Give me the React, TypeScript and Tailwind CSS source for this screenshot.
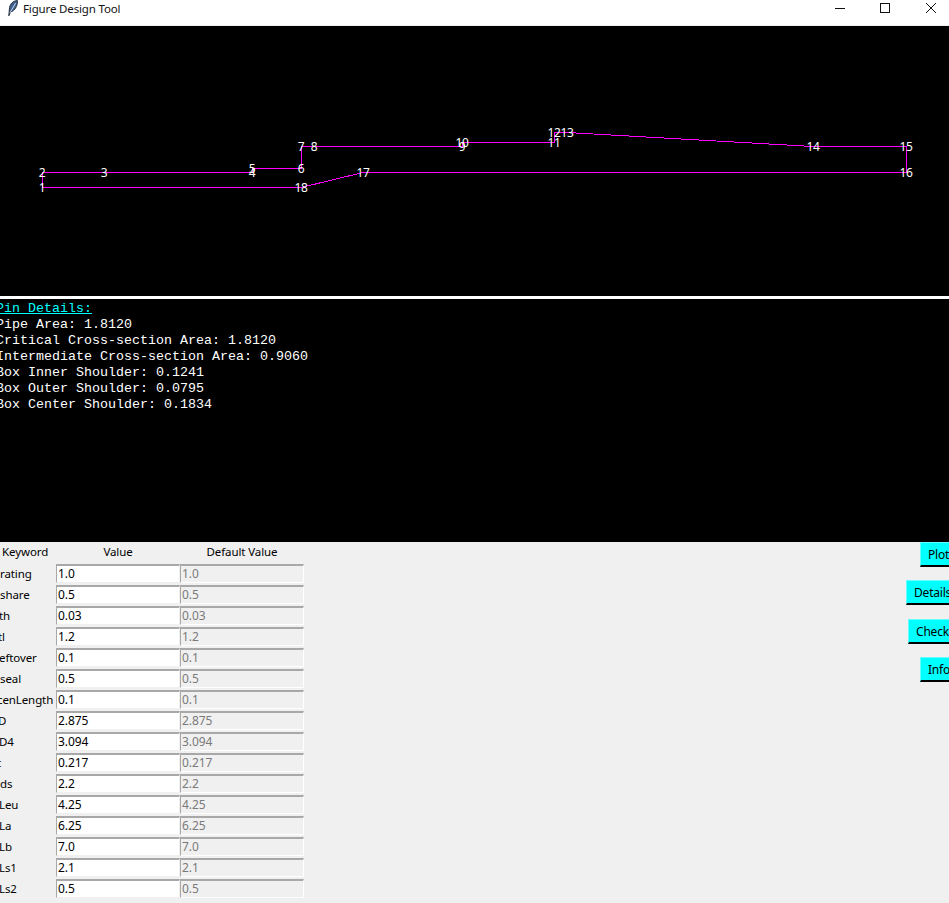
import React from "react";

const UI = { fontFamily: '"Noto Sans", "Open Sans", sans-serif' };

const pts: Record<number, [number, number]> = {
  1: [42, 187.5], 2: [42, 172.5], 3: [104, 172.5], 4: [252, 172.5], 5: [252, 168.5], 6: [301, 168.5],
  7: [301, 146.5], 8: [314, 146.5], 9: [462, 146.5], 10: [462, 142.5], 11: [554, 142.5], 12: [554, 132.5],
  13: [567, 132.5], 14: [813, 146.5], 15: [906, 146.5], 16: [906, 172.5], 17: [363, 172.5], 18: [301, 187.5],
};
const order = [1, 2, 3, 4, 5, 6, 7, 8, 9, 10, 11, 12, 13, 14, 15, 16, 17, 18, 1];

const rows: [string, string, number][] = [
  ["rating", "1.0", 0], ["share", "0.5", 0], ["th", "0.03", -1], ["tl", "1.2", -2], ["eftover", "0.1", -1],
  ["seal", "0.5", 0], ["cenLength", "0.1", -3], ["D", "2.875", -2], ["D4", "3.094", -1], ["t", "0.217", -3],
  ["ds", "2.2", 0], ["Leu", "4.25", -1], ["La", "6.25", -1], ["Lb", "7.0", -1], ["Ls1", "2.1", -1], ["Ls2", "0.5", -1],
];

const details = [
  "Pipe Area: 1.8120",
  "Critical Cross-section Area: 1.8120",
  "Intermediate Cross-section Area: 0.9060",
  "Box Inner Shoulder: 0.1241",
  "Box Outer Shoulder: 0.0795",
  "Box Center Shoulder: 0.1834",
];

function TkButton({ label, w, mb }: { label: string; w: string; mb: string }) {
  return (
    <div className={`${w} ${mb} h-[25px] bg-[#00ffff] border-l border-t border-[#66ffff] border-b-2 border-b-black text-[12px] tracking-[-0.2px] text-black flex items-center pl-[7px] pt-px overflow-hidden whitespace-nowrap`}>
      {label}
    </div>
  );
}

export default function App() {
  return (
    <div className="w-[949px] h-[903px] overflow-hidden flex flex-col bg-[#f0f0f0]" style={UI}>
      <div className="h-[25px] bg-white flex items-center shrink-0 pb-[8px]">
        <svg width="16" height="17" viewBox="0 0 16 17" className="ml-[3px]">
          <path d="M14.5 0.6 C10 0.6 6.6 4.2 6.4 9 L5.8 15.8 L7.6 11.8 C11.4 11.4 14.8 6 14.5 0.6 Z" fill="#3f6190" stroke="#18222f" strokeWidth="0.9" />
          <path d="M6.8 13 L12.6 3.2" stroke="#d3e0f2" strokeWidth="0.9" fill="none" />
        </svg>
        <span className="ml-[4px] text-[11.5px] text-[#111] leading-none tracking-[-0.15px]">Figure Design Tool</span>
        <div className="ml-auto flex items-center">
          <svg width="46" height="17" viewBox="0 0 46 17"><path d="M24 8.5H34" stroke="#111" fill="none" /></svg>
          <svg width="46" height="17" viewBox="0 0 46 17"><rect x="23.5" y="3.5" width="9" height="9" stroke="#111" fill="none" /></svg>
          <svg width="46" height="17" viewBox="0 0 46 17"><path d="M23 3L33 13M33 3L23 13" stroke="#111" fill="none" /></svg>
        </div>
      </div>
      <div className="h-px bg-[#f0f0f0] shrink-0" />

      <div className="h-[270px] bg-black shrink-0 overflow-hidden">
        <svg width="949" height="270" viewBox="0 26 949 270" className="block" shapeRendering="crispEdges">
          <polyline points={order.map((n) => pts[n].join(",")).join(" ")} fill="none" stroke="#ff00ff" strokeWidth="1" />
          {Object.entries(pts).map(([n, p]) => (
            <text key={n} x={p[0]} y={p[1] + 4.5} textAnchor="middle" fontSize="12" letterSpacing="-0.3" fill="#ffffff" style={{ fontFamily: '"Noto Sans", sans-serif' }}>
              {n}
            </text>
          ))}
        </svg>
      </div>

      <div className="h-[3px] bg-white shrink-0" />

      <div className="h-[243px] bg-black shrink-0 overflow-hidden pt-[2px] text-[13.33px] leading-[16px] text-white whitespace-pre -indent-[4px]" style={{ fontFamily: '"Liberation Mono", monospace' }}>
        <div className="text-[#00ffff]"><span className="underline">Pin Details:</span></div>
        {details.map((d) => (
          <div key={d}>{d}</div>
        ))}
      </div>

      <div className="flex-1 flex justify-between overflow-hidden">
        <div className="w-[304px] text-[11.5px] tracking-[-0.1px] text-black">
          <div className="flex h-[22px] items-center pb-[2px]">
            <div className="w-[56px] pl-[2px]">Keyword</div>
            <div className="w-[124px] text-center">Value</div>
            <div className="w-[124px] text-center">Default Value</div>
          </div>
          {rows.map(([k, v, off]) => (
            <div key={k} className="flex h-[21px] items-center pb-px">
              <div className="w-[56px] overflow-hidden whitespace-nowrap">
                <span className="inline-block" style={{ marginLeft: off }}>{k}</span>
              </div>
              <div className="w-[124px] h-[19px] self-start bg-white border-l border-t-2 border-[#a8a8a8] border-r border-r-[#f0f0f0] border-b border-b-[#f0f0f0] pl-px leading-[15px] text-[12px]">{v}</div>
              <div className="w-[124px] h-[19px] self-start bg-[#f0f0f0] border-l border-t-2 border-[#a8a8a8] border-r border-r-white border-b border-b-white pl-px leading-[15px] text-[12px] text-[#7a7a7a]">{v}</div>
            </div>
          ))}
        </div>
        <div className="flex flex-col items-end">
          <TkButton label="Plot" w="w-[29px]" mb="mb-[13px]" />
          <TkButton label="Details" w="w-[43px]" mb="mb-[14px]" />
          <TkButton label="Check" w="w-[41px]" mb="mb-[13px]" />
          <TkButton label="Info" w="w-[29px]" mb="mb-0" />
        </div>
      </div>
    </div>
  );
}
